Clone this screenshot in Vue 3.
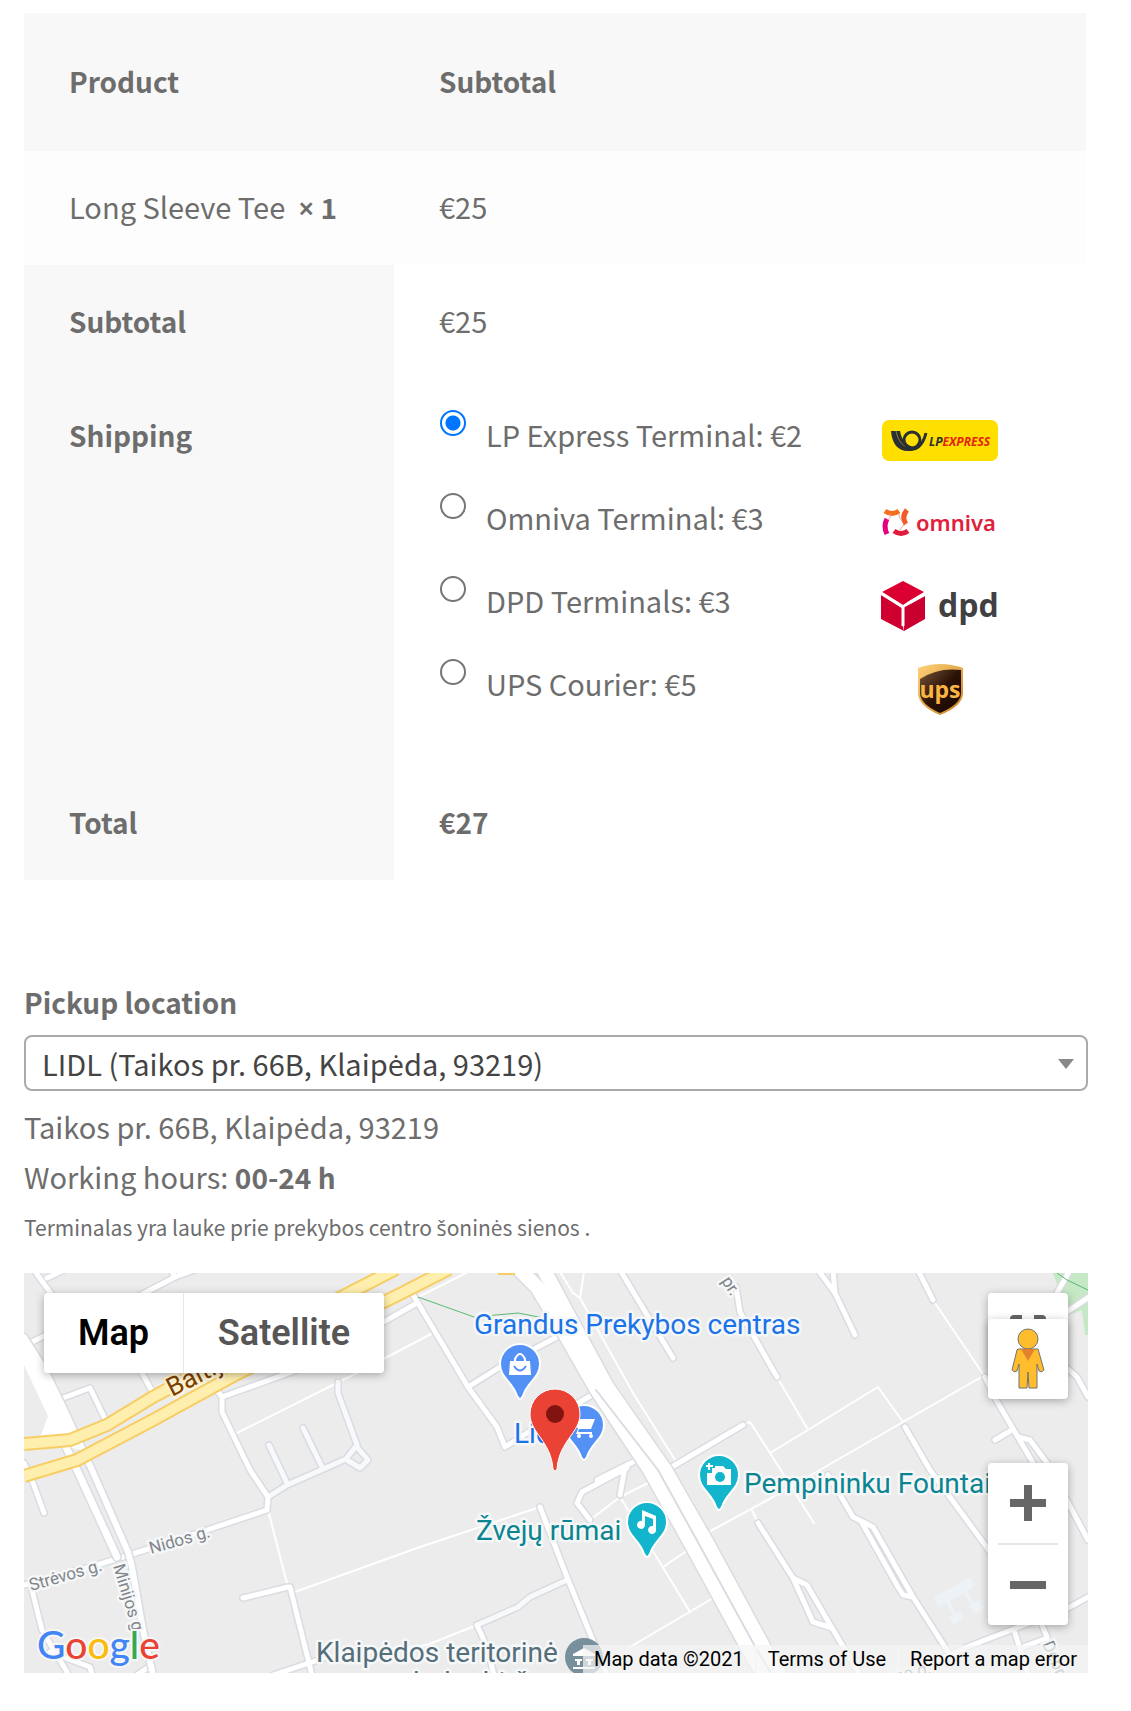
<script setup>
import { ref } from 'vue'

const shipping = ref('lp')
const location = ref('lidl')

const methods = [
  { id: 'lp', label: 'LP Express Terminal: €2' },
  { id: 'omniva', label: 'Omniva Terminal: €3' },
  { id: 'dpd', label: 'DPD Terminals: €3' },
  { id: 'ups', label: 'UPS Courier: €5' },
]

const streets = [
  'M10-3L28 22', 'M23 5L40-3', 'M113 24L151 4L170-3', 'M147-3L151 4', 'M8 69L22 62',
  'M39 125L66 115L83 150', 'M118 100L129 120',
  'M191 115L198 124V139L226 197L244 224L243 237L183 257L121 277L73 292L0 312',
  'M198 124L273 97L363 47L393 30', 'M0 190L8 207L20 240',
  'M7 313L18 357L43 399', 'M26 379L66 394L68 402', 'M113 402L126 393',
  'M219 325L264 314', 'M266 314L288 402', 'M249 402L303 384',
  'M453 352L463 374L470 402', 'M516 234L543 304L583 402',
  'M388 20L444 114L473 154L481 174L503 160L573 119', 'M444 114L476 94L533 64',
  'M573 207L613 187', 'M603 195L558 219L553 230L566 247', 'M601 194L596 222',
  'M596-3L649 85', 'M712 14L716 39L753 104', 'M646 195L719 152',
  'M794-3L811 20L831 62', 'M809-3L811 20', 'M894-3L909 27',
  'M961 104L971 125L1009 190L1018 206', 'M971 167L986 158', 'M994 164L1006 167L1023 190L1064 267',
  'M1043 95L1053 104L1064 124', 'M1046-3L1033 20', 'M1068 22L1038 42',
  'M881 154L906 197L964 276L1000 330', 'M804 202L813 217L829 244L849 254L889 324L926 382',
  'M838 250L874 314L879 322L889 324', 'M734 250L769 305L783 312L808 355L836 402',
  'M769 305L789 349L808 355', 'M1068 322L1044 335L943 374L915 387',
  'M991 360L1004 402', 'M1018 352L1023 364', 'M999 374L1023 365',
]

const alleys = [
  'M314 109V120L333 172L322 186L263 212L244 224', 'M333 174L344 187L336 195L323 187',
  'M279 155L298 194', 'M245 172L263 210', 'M453 352L494 334L506 324L543 307',
]

const paths = [
  'M209 162L329 102L409 60', 'M314 105V113', 'M244 237L264 314', 'M268 320L396 274L516 234', 'M303 384L403 372L453 352',
  'M394 24L444-1', 'M566 247L596 224L626 209', 'M596 224L666 339', 'M639 294L664 277',
  'M606 374L691 324', 'M536-1L549 20L556 25L560-1', 'M556 25L609 120L653 190',
  'M753 104L783 155', 'M719 152L726 149L746 180L790 250', 'M746 180L756 174L854 114L879 149',
  'M683 260L749 224L801 194L879 149L961 102', 'M728 237L734 250', 'M909 27L961 104',
]

const boulevards = [
  'M496-3L513 14L533 47L573 117L626 197L669 274L725 377L740 402',
  'M520-3L543 40L583 114L641 197L684 272L741 377L756 402',
]
</script>

<template>
  <main class="checkout">
    <table class="order">
      <thead>
        <tr><th scope="col">Product</th><th scope="col">Subtotal</th></tr>
      </thead>
      <tbody>
        <tr class="item">
          <td>Long Sleeve Tee&nbsp; <strong><span class="sign">×</span>&nbsp;1</strong></td>
          <td>€25</td>
        </tr>
      </tbody>
      <tfoot>
        <tr><th scope="row">Subtotal</th><td>€25</td></tr>
        <tr>
          <th scope="row">Shipping</th>
          <td>
            <ul class="methods">
              <li v-for="m in methods" :key="m.id">
                <input :id="m.id" v-model="shipping" type="radio" name="shipping" :value="m.id">
                <label :for="m.id">
                  <span>{{ m.label }}</span>
                  <svg v-if="m.id === 'lp'" class="logo" viewBox="0 0 120 52" aria-hidden="true">
                    <rect x="2" y="6" width="116" height="41" rx="7" fill="#ffdf00" />
                    <path d="M11 17C12 30 18 37 28 37C34 37 37 34 37 34C30 33 22 29 20 17Z" fill="#292f33" />
                    <g fill="none" stroke="#292f33">
                      <path d="M16 17C18 27 23 33 32 35" stroke="#8a8130" stroke-width="1" />
                      <circle cx="32" cy="26" r="8" stroke-width="3" />
                      <path d="M25 34C36 39 43 31 46 19" stroke-width="3" />
                    </g>
                    <text x="49" y="32" class="lp-text" fill="#292f33">LP<tspan fill="#e42313">EXPRESS</tspan></text>
                  </svg>
                  <svg v-else-if="m.id === 'omniva'" class="logo" viewBox="0 0 120 52" aria-hidden="true">
                    <g fill="none" stroke-width="5">
                      <path d="M5 14Q12 19 19 14" stroke="#f37021" />
                      <path d="M27 13Q21 20 26 27" stroke="#f15a29" />
                      <path d="M28 34Q21 39 14 34" stroke="#e11b3c" />
                      <path d="M7 22Q3 29 7 37" stroke="#e6007e" />
                    </g>
                    <path d="M19 17Q18 20 22 24M24 28Q21 30 20 33M8 23Q11 21 10 17" fill="none" stroke="#f0a0a8" stroke-width="1" />
                    <text x="36" y="34" class="omniva-text" fill="#e1203c">omniva</text>
                  </svg>
                  <svg v-else-if="m.id === 'dpd'" class="logo" viewBox="0 0 120 52" aria-hidden="true">
                    <path d="M23 1L44 12L29 21L23 25L2 12Z" fill="#dc0032" />
                    <path d="M1 15L22 28V44L24 51L1 39Z" fill="#cf0030" />
                    <path d="M23 28L45 16V39L24 51Z" fill="#c9002f" />
                    <path d="M1 13L23 27V46M29 23L45 14" fill="none" stroke="#fff" stroke-width="3" />
                    <text x="58" y="37" class="dpd-text" fill="#414042">dpd</text>
                  </svg>
                  <svg v-else class="logo" viewBox="0 0 120 52" aria-hidden="true">
                    <defs>
                      <linearGradient id="gold" x1="0" y1="0" x2="1" y2="1">
                        <stop offset="0" stop-color="#ffd27a" /><stop offset="1" stop-color="#c8811e" />
                      </linearGradient>
                      <linearGradient id="brown" x1="0" y1="0" x2="1" y2="1">
                        <stop offset="0" stop-color="#7a5538" /><stop offset=".5" stop-color="#2b1206" /><stop offset="1" stop-color="#160500" />
                      </linearGradient>
                    </defs>
                    <path d="M38 5Q60-3 83 5V30Q83 43 60 52Q38 43 38 30Z" fill="url(#gold)" />
                    <path d="M40 16Q58 4 81 7V30Q81 41 60 50Q40 41 40 30Z" fill="url(#brown)" />
                    <text x="60" y="35" class="ups-text" fill="#f9b544" text-anchor="middle">ups</text>
                  </svg>
                </label>
              </li>
            </ul>
          </td>
        </tr>
        <tr class="total"><th scope="row">Total</th><td><strong>€27</strong></td></tr>
      </tfoot>
    </table>

    <section class="pickup">
      <label class="pickup-label" for="pickup">Pickup location</label>
      <div class="select">
        <select id="pickup" v-model="location">
          <option value="lidl">LIDL (Taikos pr. 66B, Klaipėda, 93219)</option>
        </select>
        <span class="selected" aria-hidden="true">LIDL (Taikos pr. 66B, Klaip<span class="accent">ė</span>da, 93219)</span>
      </div>
      <p>Taikos pr. 66B, Klaip<span class="accent">ė</span>da, 93219</p>
      <p>Working hours: <strong>00-24 h</strong></p>
      <p class="note">Terminalas yra lauke prie prekybos centro <span class="accent">š</span>onin<span class="accent">ė</span>s sienos .</p>
    </section>

    <section class="map" aria-label="Map">
      <svg class="canvas" viewBox="0 0 1064 400" preserveAspectRatio="xMidYMid slice">
        <defs>
          <path id="pin" d="M0-20A20 20 0 0 1 20 0C20 14 7 18 3 32Q0 38-3 32C-7 18-20 14-20 0A20 20 0 0 1 0-20Z" />
        </defs>
        <path d="M1029 0H1064V62H1061L1058 37L1040 44L1034 14Z" fill="#c5e8c5" />
        <path d="M910 324L946 304L951 312L943 318L950 330L954 327L960 335L951 341L945 334L948 332L940 320L926 328L932 341L936 338L940 345L930 352L925 344L929 342L922 329L914 334Z" fill="#edf2f6" />
        <g class="roads">
          <path v-for="d in paths" :key="d" :d="d" stroke="#fff" stroke-width="2" />
          <path v-for="d in streets" :key="'c' + d" :d="d" stroke="#d9dce2" stroke-width="8" />
          <path v-for="d in alleys" :key="'c' + d" :d="d" stroke="#d9dce2" stroke-width="8" />
          <path v-for="d in alleys" :key="d" :d="d" stroke="#f8f9fb" stroke-width="5" />
          <path v-for="d in streets" :key="d" :d="d" stroke="#fff" stroke-width="5" />
          <path v-for="d in boulevards" :key="'c' + d" :d="d" stroke="#d9dce2" stroke-width="17" />
          <path d="M0 64L21 97L39 134L68 197L104 279L108 294L119 357L129 402" stroke="#d9dce2" stroke-width="9" />
          <path d="M93 284L53 197L29 147" stroke="#d9dce2" stroke-width="10" />
          <path v-for="d in boulevards" :key="d" :d="d" stroke="#fff" stroke-width="14" />
          <path d="M93 284L53 197L29 147" stroke="#fff" stroke-width="7" />
          <path d="M0 64L21 97L39 134L68 197L104 279L108 294L119 357L129 402" stroke="#fff" stroke-width="6" />
          <path d="M0 64L21 97L50 160L56 177L16 165L24 143L0 92Z" fill="#fff" />
          <path d="M572 117L634 197L676 273L733 377L748 402" stroke="#d9dce2" stroke-width="2" />
          <g class="highway">
            <path d="M0 171L46 167L83 152L129 124L179 97L329 18L372-4M0 203L53 187L129 147L209 103L376 21L425-4" stroke="#f7cd64" stroke-width="14" />
            <path d="M0 171L46 167L83 152L129 124L179 97L329 18L372-4M0 203L53 187L129 147L209 103L376 21L425-4" stroke="#ffefae" stroke-width="10" />
            <path d="M474 0H491" stroke="#f7cd64" stroke-width="4" />
          </g>
        </g>
        <path d="M394 24L450 44L494 40L520 45M1033 0L1043 7L1064 17" fill="none" stroke="#5bb974" stroke-width="1" />
        <g class="street-names">
          <text transform="translate(127 281) rotate(-16)">Nidos g.</text>
          <text transform="translate(7 318) rotate(-16)">Strėvos g.</text>
          <text transform="translate(89 293) rotate(73)">Minijos g.</text>
          <text transform="translate(697 8) rotate(57)">pr.</text>
          <text transform="translate(1018 371) rotate(66)">Debr</text>
          <text transform="translate(872 409) rotate(-14)">no g.</text>
          <text transform="translate(148 124) rotate(-27)" class="highway-name">Baltijos pr.</text>
        </g>
        <g class="places">
          <text x="450" y="61" fill="#1a73e8">Grandus Prekybos centras</text>
          <text x="490" y="170" fill="#1a73e8">Lidl</text>
          <text x="720" y="220" fill="#0b8591">Pempininku Fountains</text>
          <text x="452" y="267" fill="#0b8591">Žvejų rūmai</text>
          <text x="292" y="389" fill="#546e7a">Klaipėdos teritorinė</text>
          <text x="520" y="419" fill="#546e7a" text-anchor="end">darbo birža</text>
        </g>
        <g stroke="#fff" stroke-width="2">
          <use href="#pin" x="496" y="91" fill="#5491f5" />
          <use href="#pin" x="560" y="152" fill="#5491f5" />
          <use href="#pin" x="695" y="202" fill="#12b5cb" />
          <use href="#pin" x="623" y="249" fill="#12b5cb" />
          <circle cx="560" cy="384" r="19" fill="#78909c" stroke="none" />
        </g>
        <g fill="#fff">
          <path d="M486 88H506L507 102H485Z" />
          <path d="M491 90V86Q496 76 501 86V90" fill="none" stroke="#fff" stroke-width="2" />
          <path d="M490 93Q496 102 502 93" fill="none" stroke="#5491f5" stroke-width="2" />
          <path d="M548 144H552L553 146H571L567 156H555L554 159H568V161H552L554 156Z" />
          <circle cx="555" cy="163" r="2" /><circle cx="567" cy="163" r="2" />
          <path d="M683 200H688V195H691V193H699L702 196H707V212H683Z" />
          <path d="M685 190V197M682 193H689" stroke="#fff" stroke-width="2" />
          <circle cx="696" cy="204" r="5" fill="#12b5cb" />
          <path d="M618 237L632 243V256A4 4 0 1 1 629 253V246L621 243V252A4 4 0 1 1 618 248Z" />
          <path d="M549 381L560 375L571 381V383H549ZM551 386H558V388H556V392H553V388H551ZM562 386H569V388H567V392H564V388H562ZM549 394H571V396H549Z" />
        </g>
        <path d="M531 116A25 25 0 0 1 556 141C556 160 535 168 533 196Q531 200 529 196C527 168 506 160 506 141A25 25 0 0 1 531 116Z" fill="#ea4335" stroke="#fff" stroke-width="1" />
        <circle cx="531" cy="141" r="9" fill="#811411" />
      </svg>

      <div class="map-types">
        <button type="button" class="active">Map</button>
        <button type="button">Satellite</button>
      </div>
      <button type="button" class="control fullscreen" aria-label="Toggle fullscreen view">
        <svg width="36" height="36" viewBox="0 0 18 18"><path d="M2 0Q0 0 0 2V6H2V2H6V0ZM12 0V2H16V6H18V2Q18 0 16 0ZM0 12V16Q0 18 2 18H6V16H2V12ZM16 12V16H12V18H16Q18 18 18 16V12Z" fill="#666" /></svg>
      </button>
      <button type="button" class="control pegman" aria-label="Street View">
        <svg width="36" height="62" viewBox="0 0 36 62">
          <g fill="#ffbd2e" stroke="#71716f" stroke-width="1">
            <path d="M8 21H28L34 42Q32 45 29 43L27 36V60H19L18 44L17 60H9V36L7 43Q4 45 2 42L7 22Z" />
            <circle cx="18" cy="11" r="10" />
          </g>
          <path d="M11 21H25L18 33Z" fill="#e2812e" />
        </svg>
      </button>
      <div class="zoom">
        <button type="button" aria-label="Zoom in"><svg width="36" height="36"><path d="M14 0H22V14H36V22H22V36H14V22H0V14H14Z" fill="#666" /></svg></button>
        <button type="button" aria-label="Zoom out"><svg width="36" height="36"><path d="M0 14H36V22H0Z" fill="#666" /></svg></button>
      </div>
      <a class="google" href="#" aria-label="Google"><span class="b">G</span><span class="r">o</span><span class="y">o</span><span class="b">g</span><span class="g">l</span><span class="r">e</span></a>
      <footer class="attribution">
        <span>Map data ©2021</span>
        <a href="#">Terms of Use</a>
        <a href="#">Report a map error</a>
      </footer>
    </section>
  </main>
</template>

<style>
body { margin: 0; background: #fff; }
</style>

<style scoped>
.checkout {
  box-sizing: border-box;
  padding: 13px 43px 38px 24px;
  color: #6d6d6d;
  font-family: "Noto Sans CJK JP", "Noto Sans", sans-serif;
  font-size: 29px;
  line-height: 52px;
}
.order {
  width: calc(100% - 2px);
  border-collapse: collapse;
  table-layout: fixed;
}
th, td { padding: 30px 45px 32px; text-align: left; vertical-align: top; }
td { padding-block: 29px 33px; }
th, strong, .pickup-label { font-size: 28px; font-weight: 600; }
strong { line-height: 1; }
th:first-child { width: 280px; }
thead th { padding-block: 42px 44px; }
th { background: #f8f8f8; }
.item td { background: #fdfdfd; white-space: nowrap; }
.sign, .accent { font-family: "Noto Sans", sans-serif; line-height: 1; }
.accent { font-family: "Open Sans", sans-serif; }
.methods { margin: 0; padding: 0 0 4px; list-style: none; }
.methods li { display: flex; align-items: flex-start; height: 52px; margin-bottom: 31px; }
.methods li:last-child { margin-bottom: 20px; }
.methods input {
  appearance: none;
  flex: none;
  box-sizing: border-box;
  width: 26px;
  height: 26px;
  margin: 2px 20px 0 1px;
  border: 2px solid #767676;
  border-radius: 50%;
  background: #fff;
}
.methods input:checked { border-color: #0075ff; background: radial-gradient(#0075ff 7px, #fff 8px); }
.methods label { display: flex; flex: 1; justify-content: space-between; }
.logo { flex: none; width: 120px; height: 52px; margin: 6px 41px 0 0; }
.lp-text { font: italic bold 12px "Open Sans", sans-serif; }
.omniva-text { font: 600 22px "Noto Sans", sans-serif; }
.dpd-text { font: 700 32px "Open Sans", sans-serif; }
.ups-text { font: bold 23px "Open Sans", sans-serif; }

.pickup { padding-top: 96px; }
.pickup-label { display: block; }
.select { position: relative; margin: 7px 0 10px; }
.select::after {
  content: "";
  position: absolute;
  top: 24px;
  right: 14px;
  border: 8px solid transparent;
  border-top: 10px solid #888;
  border-bottom: 0;
  pointer-events: none;
}
select {
  appearance: none;
  display: block;
  width: 100%;
  height: 56px;
  padding: 0 40px 0 16px;
  border: 2px solid #aaa;
  border-radius: 8px;
  background: #fff;
  color: transparent;
  font: inherit;
}
.selected {
  position: absolute;
  inset: 2px 40px 2px 18px;
  overflow: hidden;
  color: #444;
  white-space: nowrap;
  pointer-events: none;
}
.pickup p { margin: 0; line-height: 50px; }
.pickup .note { margin-bottom: 19px; font-size: 21px; line-height: 53px; }

.map { position: relative; height: 400px; overflow: hidden; background: #ececec; font-family: Roboto, sans-serif; }
.canvas { display: block; width: 100%; height: 100%; }
.roads { fill: none; stroke-linecap: round; stroke-linejoin: round; }
.highway { stroke-linecap: butt; }
.canvas text { stroke: #f6f7f8; stroke-width: 5px; stroke-linejoin: round; paint-order: stroke; }
.street-names text { font-size: 17px; fill: #80868b; }
.street-names .highway-name { font-size: 26px; fill: #7a3e00; stroke: #fff3cf; }
.places text { font-size: 28px; }
button { padding: 0; border: 0; background: #fff; font: inherit; }
.map-types {
  position: absolute;
  top: 20px;
  left: 20px;
  display: flex;
  height: 80px;
  border-radius: 4px;
  box-shadow: 0 2px 8px rgba(0, 0, 0, .3);
}
.map-types button { width: 200px; border-radius: 0 4px 4px 0; color: #565656; font-size: 36px; font-weight: 600; }
.map-types .active { width: 140px; border-right: 1px solid #e6e6e6; border-radius: 4px 0 0 4px; color: #000; }
.control, .zoom {
  position: absolute;
  right: 20px;
  width: 80px;
  border-radius: 4px;
  background: #fff;
  box-shadow: 0 2px 8px rgba(0, 0, 0, .3);
}
.control { display: grid; height: 80px; place-items: center; }
.fullscreen { top: 20px; }
.pegman { top: 46px; }
.zoom { top: 190px; }
.zoom button { display: grid; width: 60px; height: 80px; margin: 0 10px; place-items: center; }
.zoom button + button { height: 82px; border-top: 2px solid #e6e6e6; }
.google {
  position: absolute;
  bottom: 3px;
  left: 13px;
  font-family: Lato, sans-serif;
  font-size: 39px;
  font-weight: 500;
  line-height: 52px;
  text-decoration: none;
  -webkit-text-stroke: 4px #f6f6f6;
  paint-order: stroke;
}
.b { color: #4285f4; }
.r { color: #ea4335; }
.y { color: #fbbc05; }
.g { color: #34a853; }
.attribution {
  position: absolute;
  right: 0;
  bottom: 0;
  display: flex;
  background: rgba(245, 245, 245, .7);
  color: #000;
  font-size: 20px;
  line-height: 28px;
}
.attribution > * { padding: 0 11px; color: #000; text-decoration: none; white-space: nowrap; }
.attribution > * + * { border-left: 2px solid #f5f5f5; }
</style>
